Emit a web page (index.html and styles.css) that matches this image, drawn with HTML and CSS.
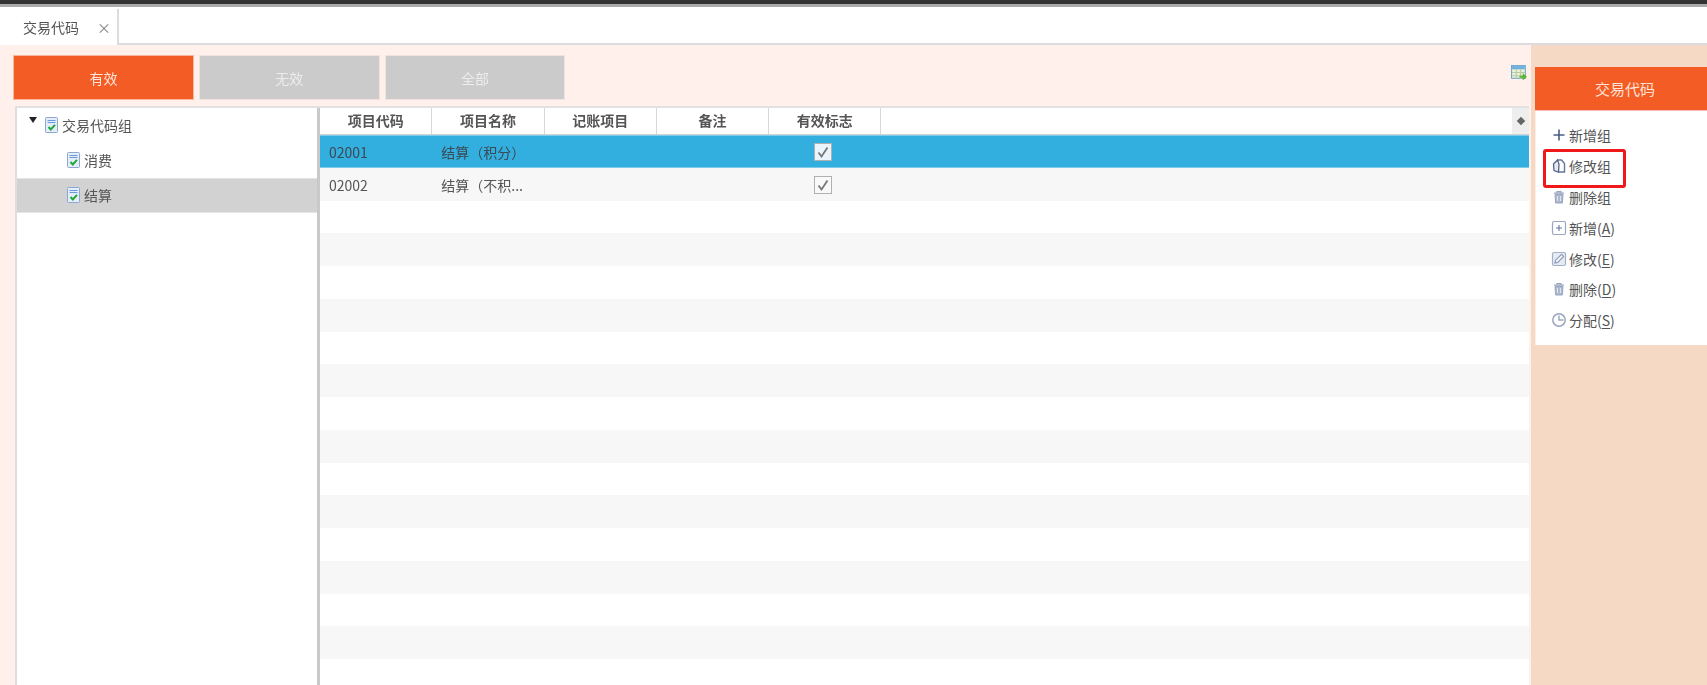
FILE: index.html
```html
<!DOCTYPE html>
<html lang="zh-CN">
<head>
<meta charset="utf-8">
<title>交易代码</title>
<link rel="stylesheet" href="styles.css">
</head>
<body>
<svg class="defs" width="0" height="0" aria-hidden="true">
  <symbol id="doc" viewBox="0 0 13 16">
    <rect x="0.5" y="0.5" width="12" height="15" rx="1" fill="#e4eefa" stroke="#8ea6d0"/>
    <path d="M2.5 3.5h8M2.5 5.5h8" stroke="#6a9bd8" stroke-width="1.2"/>
    <path d="M3.5 10l2.3 2.5L10 7.8" fill="none" stroke="#22a83a" stroke-width="2"/>
  </symbol>
  <symbol id="trash" viewBox="0 0 16 16">
    <path d="M3 4.2h10M6 4V2.6h4V4" fill="none" stroke="#9aa6c0" stroke-width="1.2"/>
    <path d="M4 5.5h8l-.6 8.5H4.6z" fill="#aeb8cd" stroke="#9aa6c0"/>
    <path d="M6.5 7v5M9.5 7v5" stroke="#dfe4ee" stroke-width="1"/>
  </symbol>
</svg>
<div class="app">
  <div class="topbar"></div>
  <div class="tabbar">
    <div class="tab"><span class="tab-title">交易代码</span><span class="tab-close">×</span></div>
  </div>
  <div class="main">
    <section class="content">
      <div class="toolbar">
        <button class="filter filter-on">有效</button>
        <button class="filter">无效</button>
        <button class="filter">全部</button>
        <svg class="export" viewBox="0 0 16 15" width="17" height="16">
          <rect x="0.5" y="0.5" width="13" height="12" fill="#e8f0d8" stroke="#6fa8cf"/>
          <rect x="1" y="1" width="12" height="3" fill="#6fb0de"/>
          <path d="M1 7h12M1 10h12M5 4v9M9 4v9" stroke="#b9c9a8" stroke-width="1"/>
          <path d="M8 10h3V7.5l4 3.5-4 3.5V12H8z" fill="#5cb531"/>
        </svg>
      </div>
      <div class="split">
        <aside class="tree">
          <div class="node node-root"><span class="caret"></span><svg class="doc"><use href="#doc"/></svg>交易代码组</div>
          <div class="node node-child"><svg class="doc"><use href="#doc"/></svg>消费</div>
          <div class="node node-child node-on"><svg class="doc"><use href="#doc"/></svg>结算</div>
        </aside>
        <div class="grid">
          <div class="grid-head">
            <div class="th">项目代码</div>
            <div class="th">项目名称</div>
            <div class="th">记账项目</div>
            <div class="th">备注</div>
            <div class="th">有效标志</div>
            <div class="th-fill"><span class="th-more"><i></i></span></div>
          </div>
          <div class="grid-body">
            <div class="row row-on">
              <div class="td">02001</div><div class="td">结算（积分）</div><div class="td"></div><div class="td"></div>
              <div class="td td-check"><span class="check"><svg viewBox="0 0 18 18" width="18" height="18"><path d="M4.5 9.5l3 4 6-9" fill="none" stroke="#777" stroke-width="1.8"/></svg></span></div>
            </div>
            <div class="row">
              <div class="td">02002</div><div class="td">结算（不积...</div><div class="td"></div><div class="td"></div>
              <div class="td td-check"><span class="check"><svg viewBox="0 0 18 18" width="18" height="18"><path d="M4.5 9.5l3 4 6-9" fill="none" stroke="#777" stroke-width="1.8"/></svg></span></div>
            </div>
            <div class="row"></div><div class="row"></div><div class="row"></div><div class="row"></div>
            <div class="row"></div><div class="row"></div><div class="row"></div><div class="row"></div>
            <div class="row"></div><div class="row"></div><div class="row"></div><div class="row"></div>
            <div class="row"></div><div class="row"></div><div class="row"></div>
          </div>
        </div>
      </div>
    </section>
    <aside class="side">
      <div class="side-head">交易代码</div>
      <ul class="menu">
        <li class="item"><svg class="ico" viewBox="0 0 16 16"><path d="M8 2.5v11M2.5 8h11" stroke="#4a5d85" stroke-width="1.6"/></svg>新增组</li>
        <li class="item item-mark"><svg class="ico" viewBox="0 0 16 16"><path d="M6.5 2h4l3 3.5V14H7.5" fill="none" stroke="#66759a" stroke-width="1.4"/><path d="M2.5 6L6.5 2l1.5 4-.5 8-4.5-1.5z" fill="#e6eaf2" stroke="#55658a" stroke-width="1.3"/></svg>修改组</li>
        <li class="item"><svg class="ico"><use href="#trash"/></svg>删除组</li>
        <li class="item"><svg class="ico" viewBox="0 0 16 16"><rect x="1.5" y="1.5" width="13" height="13" rx="1.5" fill="none" stroke="#9aa6c0" stroke-width="1.2"/><path d="M8 5v6M5 8h6" stroke="#66759a" stroke-width="1.1"/></svg>新增(<u>A</u>)</li>
        <li class="item"><svg class="ico" viewBox="0 0 16 16"><rect x="1.5" y="1.5" width="13" height="13" rx="1.5" fill="#e6eaf2" stroke="#a4afc8" stroke-width="1.2"/><path d="M4 12l.6-2.6 6-6 2 2-6 6z" fill="#fff" stroke="#8e9bb9" stroke-width="1.2"/></svg>修改(<u>E</u>)</li>
        <li class="item"><svg class="ico"><use href="#trash"/></svg>删除(<u>D</u>)</li>
        <li class="item"><svg class="ico" viewBox="0 0 16 16"><circle cx="8" cy="8" r="6.2" fill="none" stroke="#9aa6c0" stroke-width="1.5"/><path d="M8 3.5V8h4.5" fill="none" stroke="#9aa6c0" stroke-width="1.4"/></svg>分配(<u>S</u>)</li>
      </ul>
    </aside>
  </div>
</div>
</body>
</html>
```
FILE: styles.css
```css
* { box-sizing: border-box; }
html, body { margin: 0; height: 100%; overflow: hidden; background: #fff; }
body { font-family: "Noto Sans CJK SC", "Noto Sans", sans-serif; font-size: 14px; color: #555; }
.defs { position: absolute; }
.app { display: flex; flex-direction: column; height: 685px; filter: blur(0.55px); }

.topbar { height: 9px; flex: none; background: #fff; border-top: 4px solid #333; box-shadow: inset 0 3px 0 #aaa; }

.tabbar { flex: none; height: 36px; display: flex; border-bottom: 2px solid #dcdcdc; }
.tab { width: 119px; height: 36px; display: flex; align-items: center; padding-left: 23px; background: #fff; border-right: 2px solid #dcdcdc; }
.tab-title { width: 74px; color: #555; line-height: 20px; }
.tab-close { font-size: 14px; line-height: 20px; color: #888; }

.main { flex: 1; min-height: 0; display: flex; }

.content { width: 1531px; flex: none; background: #fff0ec; padding-top: 10px; display: flex; flex-direction: column; }
.toolbar { display: flex; height: 51px; flex: none; gap: 5px; padding-left: 13px; }
.filter { width: 180.8px; height: 45px; border: 1px solid #f0e2de; background: #cbcbcb; color: #ececec; font: inherit; padding: 0; }
.filter-on { background: #f45c25; color: #ffe6da; border-color: #f9b79c; }
.export { margin: 10px 3px 0 auto; }

.split { flex: 1; min-height: 0; display: flex; margin: 0 2px 0 15px; border-top: 2px solid #e2e2e2; }
.tree { width: 305px; flex: none; background: #fff; border-left: 2px solid #dedede; border-right: 3px solid #c9c9c9; }
.node { height: 35px; display: flex; align-items: center; color: #555; }
.node-root { padding: 0 0 1px 12px; height: 34.5px; }
.node-child { padding-left: 50px; }
.node-on { background: #d2d2d2; border-top: 1px solid #e4e4e4; border-bottom: 1px solid #e4e4e4; }
.caret { width: 0; height: 0; border-left: 4px solid transparent; border-right: 4px solid transparent; border-top: 6px solid #222; margin: -10px 8px 0 0; }
.doc { width: 13px; height: 16px; margin-right: 4px; flex: none; }

.grid { flex: 1; min-width: 0; background: #fff; display: flex; flex-direction: column; }
.grid-head { flex: none; height: 27px; display: flex; border-bottom: 1px solid #cfd3d6; }
.th { width: 112.3px; flex: none; text-align: center; line-height: 25px; font-weight: 700; color: #555; border-right: 1px solid #d8d8d8; }
.th-fill { flex: 1; display: flex; justify-content: flex-end; }
.th-more { width: 17px; display: flex; align-items: center; justify-content: center; background: #eeeeee; }
.th-more i { width: 6px; height: 6px; background: #666; transform: rotate(45deg); }

.grid-body { flex: 1; min-height: 0; overflow: hidden; }
.row { height: 32.75px; display: flex; align-items: center; background: #fff; padding-top: 1px; }
.row:nth-child(even) { background: #f7f7f7; }
.row-on { background: #32afdf; border-top: 1px solid #7ccbea; border-bottom: 1px solid #7ccbea; color: #3c4a52; }
.td { width: 112.3px; flex: none; padding-left: 9px; white-space: nowrap; overflow: hidden; }
.td-check { padding: 0 4px 0 0; display: flex; justify-content: center; }
.check { width: 18px; height: 18px; display: block; background: #f9f9f9; border: 1px solid #b0b0b0; box-shadow: 0 1px 0 #ccc; }
.check svg { display: block; margin: -1px; }
.row-on .check { background: #eaf5fb; }

.side { flex: 1; min-width: 0; background: #f6d9c4; padding: 22px 0 0 4px; }
.side-head { height: 44px; background: #f45c25; color: #ffe3d6; font-size: 15px; display: flex; align-items: center; justify-content: center; padding-left: 8px; border-bottom: 1px solid #fbb; }
.menu { list-style: none; margin: 0; padding: 8.5px 0 9px 0; background: #fff; border-left: 1px solid #fdeee3; }
.item { height: 30.9px; display: flex; align-items: center; padding-left: 15px; color: #555; position: relative; white-space: pre; }
.ico { width: 16px; height: 16px; margin-right: 2px; flex: none; }
.item u { text-underline-offset: 2px; }
.item-mark::after { content: ""; position: absolute; left: 7px; top: -1px; width: 77px; height: 33px; border: 3px solid #f01818; border-radius: 3px; }
```
